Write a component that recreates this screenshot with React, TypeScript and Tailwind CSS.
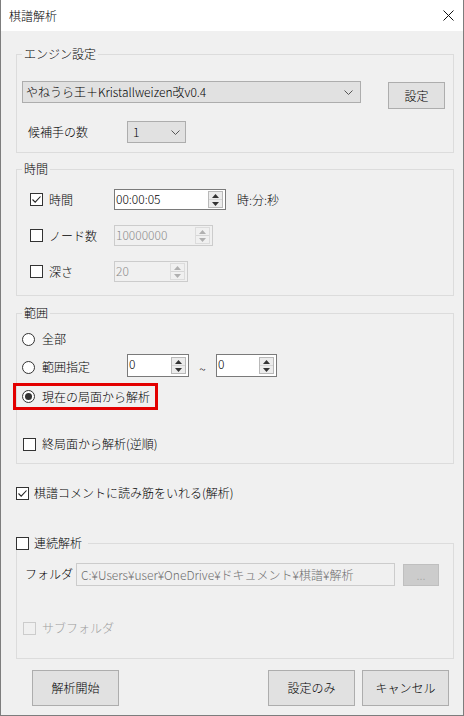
import React from 'react';

const FONT = { fontFamily: '"Noto Sans CJK JP", "Noto Sans", sans-serif' };

const Chevron = () => (
  <svg width="9" height="5" viewBox="0 0 9 5" className="shrink-0">
    <path d="M0.5 0.5 L4.5 4.5 L8.5 0.5" fill="none" stroke="#555" strokeWidth="1" />
  </svg>
);

const Check = ({ checked, disabled }: { checked?: boolean; disabled?: boolean }) => (
  <span
    className={`w-[13px] h-[13px] shrink-0 border flex items-center justify-center ${
      disabled ? 'border-[#cccccc] bg-[#f0f0f0]' : 'border-[#333333] bg-white'
    }`}
  >
    {checked && (
      <svg width="11" height="11" viewBox="0 0 11 11">
        <path d="M1.5 5.5 L4.2 8.2 L9.5 2.5" fill="none" stroke="#222" strokeWidth="1.1" />
      </svg>
    )}
  </span>
);

const Radio = ({ checked }: { checked?: boolean }) => (
  <span className="w-[13px] h-[13px] shrink-0 rounded-full border border-[#333333] bg-white flex items-center justify-center">
    {checked && <span className="w-[7px] h-[7px] rounded-full bg-[#333333]" />}
  </span>
);

const Spin = ({ disabled }: { disabled?: boolean }) => {
  const c = disabled ? '#b0b0b0' : '#333';
  return (
    <span
      className={`w-[15px] h-[17px] shrink-0 flex flex-col border ${
        disabled ? 'border-[#dcdcdc] bg-[#f0f0f0]' : 'border-[#b9b9b9] bg-[#ececec]'
      }`}
    >
      <span className="flex-1 flex items-center justify-center border-b border-[#d6d6d6]">
        <svg width="7" height="4" viewBox="0 0 7 4">
          <path d="M0 4 L3.5 0 L7 4 Z" fill={c} />
        </svg>
      </span>
      <span className="flex-1 flex items-center justify-center">
        <svg width="7" height="4" viewBox="0 0 7 4">
          <path d="M0 0 L3.5 4 L7 0 Z" fill={c} />
        </svg>
      </span>
    </span>
  );
};

const NumBox = ({ value, width, height, disabled }: { value: string; width: string; height: string; disabled?: boolean }) => (
  <div
    className={`${width} ${height} flex items-center justify-between pl-[1px] pr-[2px] border ${
      disabled ? 'border-[#cccccc] bg-[#f0f0f0] text-[#8d8d8d]' : 'border-[#7a7a7a] bg-white text-black'
    }`}
  >
    <span className="leading-[16px] self-start mt-[1px]">{value}</span>
    <Spin disabled={disabled} />
  </div>
);

const Group = ({
  label,
  className,
  children,
}: {
  label: React.ReactNode;
  className: string;
  children: React.ReactNode;
}) => (
  <div className={`relative w-[438px] ml-[15px] border border-[#dcdcdc] ${className}`}>
    <div className="absolute -top-[9px] left-[5px] px-[2px] bg-[#f0f0f0] leading-[16px] text-black">{label}</div>
    {children}
  </div>
);

const Btn = ({ children, className }: { children: React.ReactNode; className: string }) => (
  <button className={`bg-[#e1e1e1] border border-[#adadad] flex items-center justify-center text-black ${className}`}>
    {children}
  </button>
);

export default function App() {
  return (
    <div
      style={FONT}
      className="w-[464px] h-[716px] bg-[#f0f0f0] border-l border-r border-b border-[#7d7d7d] flex flex-col text-[12px] font-light text-black"
    >
      {/* title bar */}
      <div className="h-[31px] shrink-0 bg-white flex items-center justify-between pl-[8px] pr-[9px]">
        <span className="leading-[16px]">棋譜解析</span>
        <svg width="11" height="11" viewBox="0 0 11 11">
          <path d="M0.5 0.5 L10.5 10.5 M10.5 0.5 L0.5 10.5" stroke="#111" strokeWidth="1" />
        </svg>
      </div>

      {/* エンジン設定 */}
      <Group label="エンジン設定" className="mt-[23px] pt-[26px] pl-[5px] pb-[9px]">
        <div className="flex items-start h-[28px]">
          <div className="w-[339px] h-[22px] bg-[#e1e1e1] border border-[#adadad] flex items-center justify-between pl-[3px] pr-[7px]">
            <span className="leading-[16px]">やねうら王＋Kristallweizen改v0.4</span>
            <Chevron />
          </div>
          <Btn className="ml-[27px] mt-[1px] w-[57px] h-[27px]">設定</Btn>
        </div>
        <div className="flex items-center h-[22px] mt-[12px]">
          <span className="ml-[6px] w-[99px] leading-[16px]">候補手の数</span>
          <div className="w-[59px] h-[22px] bg-[#e1e1e1] border border-[#adadad] flex items-center justify-between pl-[5px] pr-[5px]">
            <span className="leading-[16px]">1</span>
            <Chevron />
          </div>
        </div>
      </Group>

      {/* 時間 */}
      <Group label="時間" className="mt-[16px] pt-[19px] pb-[13px]">
        <div className="flex items-center h-[21px]">
          <div className="w-[97px] flex items-center gap-[6px] pl-[13px]">
            <Check checked />
            <span className="leading-[16px]">時間</span>
          </div>
          <NumBox value="00:00:05" width="w-[112px]" height="h-[21px]" />
          <span className="ml-[11px] leading-[16px]">時:分:秒</span>
        </div>
        <div className="flex items-center h-[21px] mt-[15px]">
          <div className="w-[97px] flex items-center gap-[6px] pl-[13px]">
            <Check />
            <span className="leading-[16px]">ノード数</span>
          </div>
          <NumBox value="10000000" width="w-[99px]" height="h-[21px]" disabled />
        </div>
        <div className="flex items-center h-[21px] mt-[15px]">
          <div className="w-[97px] flex items-center gap-[6px] pl-[13px]">
            <Check />
            <span className="leading-[16px]">深さ</span>
          </div>
          <NumBox value="20" width="w-[74px]" height="h-[21px]" disabled />
        </div>
      </Group>

      {/* 範囲 */}
      <Group label="範囲" className="mt-[17px] pt-[17px] pb-[11px]">
        <div className="flex items-center h-[16px] pl-[5px] gap-[7px]">
          <Radio />
          <span className="leading-[16px]">全部</span>
        </div>
        <div className="flex items-center h-[23px] mt-[7px] pl-[5px]">
          <div className="w-[105px] flex items-center gap-[7px] mt-[3px]">
            <Radio />
            <span className="leading-[16px]">範囲指定</span>
          </div>
          <NumBox value="0" width="w-[62px]" height="h-[23px]" />
          <span className="w-[27px] text-center leading-[16px] mt-[6px]">~</span>
          <NumBox value="0" width="w-[61px]" height="h-[23px]" />
        </div>
        <div className="-ml-[4px] mt-[6px] w-[145px] h-[27px] border-[3px] border-[#e30000] flex items-center pl-[6px] gap-[7px]">
          <Radio checked />
          <span className="leading-[16px]">現在の局面から解析</span>
        </div>
        <div className="flex items-center h-[16px] mt-[26px] pl-[6px] gap-[6px]">
          <Check />
          <span className="leading-[16px]">終局面から解析(逆順)</span>
        </div>
      </Group>

      <div className="flex items-center h-[16px] mt-[21px] ml-[15px] gap-[5px]">
        <Check checked />
        <span className="leading-[16px]">棋譜コメントに読み筋をいれる(解析)</span>
      </div>

      {/* 連続解析 */}
      <Group
        label={
          <span className="flex items-center gap-[5px] -ml-[8px] pr-[4px]">
            <Check />
            <span className="leading-[16px]">連続解析</span>
          </span>
        }
        className="mt-[42px] pt-[19px] pb-[22px]"
      >
        <div className="flex items-start h-[23px]">
          <span className="ml-[8px] w-[51px] leading-[16px] mt-[3px]">フォルダ</span>
          <div className="w-[319px] h-[23px] border border-[#cccccc] bg-[#f0f0f0] text-[#6d6d6d] flex items-center pl-[4px]">
            <span className="leading-[16px]">C:¥Users¥user¥OneDrive¥ドキュメント¥棋譜¥解析</span>
          </div>
          <div className="ml-[8px] mt-[1px] w-[36px] h-[22px] bg-[#cccccc] border border-[#bfbfbf] flex items-center justify-center text-[#a0a0a0] leading-[10px]">
            ...
          </div>
        </div>
        <div className="flex items-center h-[16px] mt-[34px] ml-[6px] gap-[6px]">
          <Check disabled />
          <span className="leading-[16px] text-[#a0a0a0]">サブフォルダ</span>
        </div>
      </Group>

      {/* buttons */}
      <div className="flex mt-[11px] ml-[31px]">
        <Btn className="w-[87px] h-[36px]">解析開始</Btn>
        <Btn className="w-[87px] h-[36px] ml-[149px]">設定のみ</Btn>
        <Btn className="w-[87px] h-[36px] ml-[7px]">キャンセル</Btn>
      </div>
    </div>
  );
}
